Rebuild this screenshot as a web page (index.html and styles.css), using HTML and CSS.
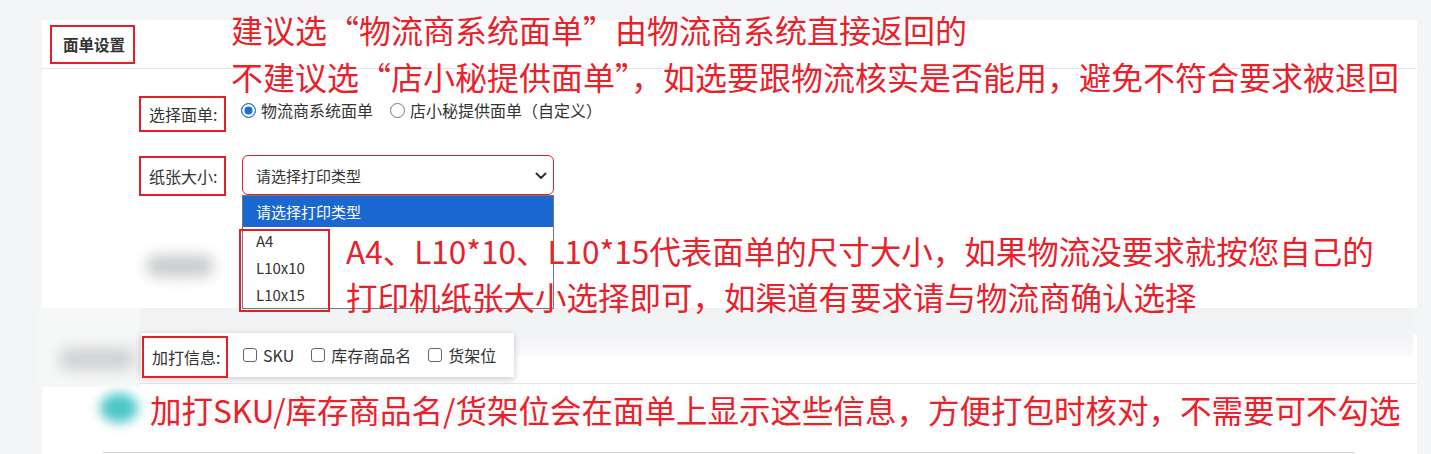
FILE: index.html
```html
<!DOCTYPE html>
<html lang="zh-CN">
<head>
<meta charset="utf-8">
<title>面单设置</title>
<link rel="stylesheet" href="styles.css">
</head>
<body>
<div class="page">
  <section class="card card-main">
    <div class="card-head">
      <h2 class="card-title">面单设置</h2>
    </div>
    <div class="card-body">
      <div class="form-row row-type">
        <span class="form-label">选择面单:</span>
        <div class="radios">
          <span class="radio checked"></span><span class="opt-text">物流商系统面单</span>
          <span class="radio"></span><span class="opt-text">店小秘提供面单（自定义）</span>
        </div>
      </div>
      <div class="form-row row-paper">
        <span class="form-label">纸张大小:</span>
        <div class="select-wrap">
          <div class="select">
            <span>请选择打印类型</span>
            <svg class="chevron" width="12" height="8" viewBox="0 0 12 8"><path d="M1.5 1.5 L6 6 L10.5 1.5" fill="none" stroke="#333" stroke-width="2" stroke-linecap="round" stroke-linejoin="round"/></svg>
          </div>
          <ul class="options">
            <li class="opt selected">请选择打印类型</li>
            <li class="opt">A4</li>
            <li class="opt">L10x10</li>
            <li class="opt">L10x15</li>
          </ul>
          <span class="options-box"></span>
        </div>
      </div>
      <div class="ghost-row"><span class="blob blob-gray"></span></div>
    </div>
  </section>

  <section class="card card-second">
    <div class="card-head second-head"></div>
    <div class="second-body">
      <div class="note-row">
        <span class="blob blob-teal"></span>
        <p class="note note-3">加打SKU/库存商品名/货架位会在面单上显示这些信息，方便打包时核对，不需要可不勾选</p>
      </div>
      <div class="input-line"></div>
    </div>
  </section>

  <div class="smudge smudge-left"><span class="blob blob-gray2"></span></div>
  <div class="smudge smudge-band"></div>

  <div class="popup">
    <span class="form-label popup-label">加打信息:</span>
    <span class="check"></span><span class="opt-text">SKU</span>
    <span class="check"></span><span class="opt-text">库存商品名</span>
    <span class="check"></span><span class="opt-text">货架位</span>
  </div>

  <div class="note note-1">
    <div>建议选“物流商系统面单”由物流商系统直接返回的</div>
    <div>不建议选“店小秘提供面单”，如选要跟物流核实是否能用，避免不符合要求被退回</div>
  </div>
  <div class="note note-2">
    <div>A4、L10*10、L10*15代表面单的尺寸大小，如果物流没要求就按您自己的</div>
    <div>打印机纸张大小选择即可，如渠道有要求请与物流商确认选择</div>
  </div>
</div>
</body>
</html>
```
FILE: styles.css
```css
* { box-sizing: border-box; }
html, body { margin: 0; padding: 0; }
body {
  background: #f4f5f7;
  font-family: "Noto Sans CJK SC", "Noto Sans", sans-serif;
  color: #333;
  width: 1431px;
  height: 454px;
  overflow: hidden;
}
.page {
  position: relative;
  padding: 20px 14px 0 42px;
  height: 454px;
}
.card { background: #fff; }
.card-main { height: 288px; }
.card-head {
  height: 49px;
  border-bottom: 1px solid #e5e7ea;
  display: flex;
  align-items: center;
  padding-left: 8px;
}
.card-title {
  margin: 0;
  height: 39px;
  line-height: 35px;
  padding: 0 8px 0 11px;
  border: 2px solid #e3202a;
  font-size: 15.5px;
  font-weight: 700;
  color: #333;
}
.card-body { padding-top: 27px; }
.form-row {
  display: flex;
  align-items: flex-start;
  padding-left: 97px;
}
.form-label {
  display: block;
  width: 87px;
  height: 36px;
  line-height: 32px;
  padding-left: 8px;
  border: 2px solid #e3202a;
  font-size: 16px;
  color: #333;
  white-space: nowrap;
}
.row-paper { margin-top: 23px; }
.row-paper .form-label { height: 40px; line-height: 36px; margin-top: 1px; }
.radios {
  display: flex;
  align-items: center;
  margin-left: 15px;
  margin-top: 4px;
  height: 20px;
  font-size: 16px;
}
.radio {
  width: 15px;
  height: 15px;
  border-radius: 50%;
  border: 1.5px solid #777;
  margin-right: 5px;
  flex: none;
}
.radio.checked {
  border-color: #1a6fd3;
  background: #1a6fd3;
  box-shadow: inset 0 0 0 2.5px #fff;
  border-width: 1.5px;
}
.opt-text { white-space: nowrap; margin-right: 17px; }
.select-wrap {
  position: relative;
  margin-left: 16px;
  width: 312px;
}
.select {
  height: 40px;
  border: 1px solid #e3202a;
  border-radius: 6px;
  display: flex;
  align-items: center;
  justify-content: space-between;
  padding: 0 6px 0 13px;
  font-size: 15px;
  color: #333;
}
.chevron { margin-top: 1px; }
.options {
  position: absolute;
  left: 0;
  top: 40px;
  width: 312px;
  height: 114px;
  margin: 0;
  padding: 0;
  list-style: none;
  background: #fff;
  border: 1px solid #777;
  z-index: 2;
}
.opt {
  height: 27px;
  line-height: 27px;
  padding-left: 13px;
  font-size: 15px;
  color: #333;
}
.opt.selected {
  height: 31px;
  line-height: 31px;
  background: #1b67d2;
  color: #fff;
}
.options-box {
  position: absolute;
  left: -3px;
  top: 74px;
  width: 91px;
  height: 83px;
  border: 2px solid #e3202a;
  z-index: 3;
}
.ghost-row { margin-top: 59px; padding-left: 104px; }
.blob { display: block; border-radius: 14px; }
.blob-gray {
  width: 68px;
  height: 22px;
  background: #c9cbcd;
  filter: blur(7px);
}
.card-second { margin-top: 27px; height: 140px; }
.second-body { padding: 2px 0 0 58px; }
.note-row { display: flex; align-items: center; }
.blob-teal {
  width: 38px;
  height: 30px;
  border-radius: 50%;
  background: #4cc6c8;
  filter: blur(6px);
  margin-right: 12px;
  margin-top: -4px;
}
.input-line {
  margin: 19px 0 0 3px;
  width: 1252px;
  height: 10px;
  border-top: 1px solid #cfd1d4;
}
.note {
  margin: 0;
  color: #e8212b;
  font-size: 32px;
  line-height: 47px;
  white-space: nowrap;
}
.note-1 { position: absolute; left: 231px; top: 6px; z-index: 4; }
.note-2 { position: absolute; left: 346px; top: 227px; z-index: 4; font-size: 31.5px; line-height: 46px; }
.note-3 { font-size: 31.5px; text-shadow: 0 0 10px rgba(120,120,120,0.12); }
.smudge { position: absolute; }
.smudge-left {
  left: 37px;
  top: 308px;
  width: 103px;
  height: 79px;
  background: #f6f7f7;
  padding: 40px 0 0 22px;
}
.blob-gray2 {
  width: 76px;
  height: 22px;
  background: #cfd1d2;
  filter: blur(7px);
}
.smudge-band {
  left: 140px;
  top: 308px;
  width: 1273px;
  height: 48px;
  background: linear-gradient(#f1f2f4, #f3f4f6 60%, #fbfbfc);
}
.popup {
  position: absolute;
  left: 141px;
  top: 333px;
  width: 373px;
  height: 44px;
  background: #fff;
  box-shadow: 0 2px 7px rgba(0,0,0,0.22);
  display: flex;
  align-items: center;
  font-size: 16px;
  z-index: 3;
}
.popup-label {
  width: 86px;
  height: 42px;
  line-height: 38px;
  margin: 3px 0 0 1px;
  align-self: flex-start;
}
.check {
  width: 14px;
  height: 14px;
  border: 1.5px solid #666;
  border-radius: 3px;
  margin: 0 6px 0 0;
  flex: none;
}
.popup-label + .check { margin-left: 15px; }
.popup .opt-text { margin-right: 17px; }
```
